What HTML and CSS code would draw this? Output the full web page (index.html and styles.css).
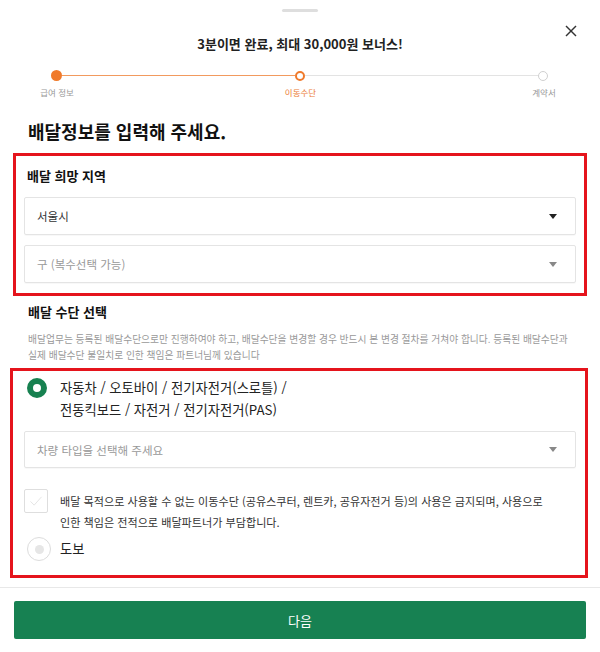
FILE: index.html
```html
<!DOCTYPE html>
<html lang="ko">

<head>
    <meta charset="UTF-8">
    <meta name="viewport" content="width=device-width, initial-scale=1.0">
    <title>배달정보 입력</title>
    <link rel="stylesheet" href="styles.css">
</head>

<body>
    <div class="sheet">
        <div class="handle"></div>

        <div class="sheet-header">
            <span></span>
            <h2 class="sheet-title">3분이면 완료, 최대 30,000원 보너스!</h2>
            <button class="close-btn" aria-label="닫기">
                <svg width="12" height="12" viewBox="0 0 12 12">
                    <line x1="1" y1="1" x2="11" y2="11" stroke="#333" stroke-width="1.4"/>
                    <line x1="11" y1="1" x2="1" y2="11" stroke="#333" stroke-width="1.4"/>
                </svg>
            </button>
        </div>

        <div class="steps">
            <span class="step-dot done"></span>
            <span class="step-line done"></span>
            <span class="step-dot current"></span>
            <span class="step-line"></span>
            <span class="step-dot"></span>
        </div>
        <div class="step-labels">
            <span>급여 정보</span>
            <span class="current">이동수단</span>
            <span>계약서</span>
        </div>

        <div class="content">
            <h1 class="page-title">배달정보를 입력해 주세요.</h1>

            <div class="highlight area-box">
                <h3 class="field-title">배달 희망 지역</h3>
                <div class="select">
                    <span>서울시</span>
                    <span class="caret"></span>
                </div>
                <div class="select placeholder">
                    <span>구 (복수선택 가능)</span>
                    <span class="caret"></span>
                </div>
            </div>

            <h3 class="section-title">배달 수단 선택</h3>
            <p class="section-desc">배달업무는 등록된 배달수단으로만 진행하여야 하고, 배달수단을 변경할 경우 반드시 본 변경 절차를 거쳐야 합니다. 등록된 배달수단과<br>실제 배달수단 불일치로 인한 책임은 파트너님께 있습니다</p>

            <div class="highlight vehicle-box">
                <div class="option">
                    <div class="option-mark"><span class="radio checked"></span></div>
                    <div class="option-label">자동차 / 오토바이 / 전기자전거(스로틀) /<br>전동킥보드 / 자전거 / 전기자전거(PAS)</div>
                </div>

                <div class="select placeholder vehicle-select">
                    <span>차량 타입을 선택해 주세요</span>
                    <span class="caret"></span>
                </div>

                <div class="agree">
                    <span class="checkbox">
                        <svg width="24" height="24" viewBox="0 0 24 24">
                            <polyline points="6,12.5 10,16.5 18,7.5" fill="none" stroke="#e2e2e2" stroke-width="1"/>
                        </svg>
                    </span>
                    <p class="agree-text">배달 목적으로 사용할 수 없는 이동수단 (공유스쿠터, 렌트카, 공유자전거 등)의 사용은 금지되며, 사용으로<br>인한 책임은 전적으로 배달파트너가 부담합니다.</p>
                </div>

                <div class="option walk">
                    <div class="option-mark"><span class="radio"><span class="radio-dot"></span></span></div>
                    <div class="option-label">도보</div>
                </div>
            </div>
        </div>

        <div class="sheet-footer">
            <button class="next-btn">다음</button>
        </div>
    </div>
</body>

</html>
```

FILE: styles.css
```css
* {
    box-sizing: border-box;
}

body {
    margin: 0;
    background: white;
    font-family: "Noto Sans CJK KR", "Noto Sans", sans-serif;
    color: #222;
}

h1, h2, h3, p {
    margin: 0;
}

.sheet {
    width: 600px;
    height: 652px;
    overflow: hidden;
}

.handle {
    width: 36px;
    height: 3px;
    margin: 9px auto 0;
    border-radius: 2px;
    background: #dedede;
}

.sheet-header {
    display: grid;
    grid-template-columns: 1fr auto 1fr;
    height: 26px;
    margin-top: 13px;
}

.sheet-title {
    align-self: end;
    font-size: 13px;
    line-height: 14px;
    font-weight: 700;
    color: #222;
}

.close-btn {
    justify-self: end;
    align-self: start;
    width: 12px;
    height: 12px;
    margin-right: 23px;
    padding: 0;
    border: none;
    background: none;
    display: flex;
}

/* step indicator */
.steps {
    display: flex;
    align-items: center;
    height: 11px;
    margin-top: 19px;
    padding: 0 52px 0 51px;
}

.step-dot {
    width: 10px;
    height: 10px;
    border-radius: 50%;
    border: 1.5px solid #d0d0d0;
    background: white;
    flex: none;
}

.step-dot.done {
    width: 11px;
    height: 11px;
    border: none;
    background: #f07a2b;
}

.step-dot.current {
    border: 2px solid #f07a2b;
}

.step-line {
    flex: 1;
    height: 1px;
    background: #e3e3e3;
}

.step-line.done {
    background: #f29a5e;
}

.step-labels {
    display: flex;
    justify-content: space-between;
    margin-top: 6px;
    padding: 0 16px 0 17px;
    font-size: 8.5px;
    line-height: 10px;
    color: #999;
}

.step-labels span {
    width: 80px;
    text-align: center;
}

.step-labels .current {
    color: #ec7a33;
}

/* form */
.content {
    padding: 0 12px 0 10px;
}

.page-title {
    margin-top: 22px;
    padding-left: 18px;
    font-size: 18px;
    line-height: 24px;
    font-weight: 700;
    color: #111;
}

.highlight {
    border: 3px solid #e5141c;
}

.area-box {
    margin: 10px 1px 0 3px;
    padding: 11px 8px 10px;
}

.field-title {
    padding-left: 3px;
    font-size: 13px;
    line-height: 18px;
    font-weight: 700;
    color: #111;
}

.select {
    display: flex;
    align-items: center;
    justify-content: space-between;
    height: 38px;
    margin-top: 10px;
    padding: 0 18px 0 12px;
    border: 1px solid #e4e4e4;
    border-radius: 2px;
    box-shadow: 0 1px 1px rgba(0, 0, 0, 0.03);
    font-size: 11.5px;
    color: #333;
}

.area-box .field-title + .select {
    margin-top: 12px;
}

.select.placeholder {
    color: #999;
}

.caret {
    width: 0;
    height: 0;
    border-left: 4px solid transparent;
    border-right: 4px solid transparent;
    border-top: 5px solid #222;
}

.placeholder .caret {
    border-top-color: #888;
}

.section-title {
    margin-top: 7px;
    padding-left: 18px;
    font-size: 13px;
    line-height: 18px;
    font-weight: 700;
    color: #111;
}

.section-desc {
    margin-top: 10px;
    padding: 0 10px 0 18px;
    font-size: 9.75px;
    line-height: 16px;
    color: #999;
    white-space: nowrap;
}

.vehicle-box {
    margin-top: 5px;
    padding: 6px 9px 14px 11px;
}

.option {
    display: flex;
    align-items: flex-start;
}

.option-mark {
    width: 36px;
    flex: none;
    display: flex;
    padding-left: 3px;
}

.option-label {
    font-size: 13.3px;
    line-height: 22px;
    color: #222;
}

.radio {
    width: 20px;
    height: 20px;
    margin-top: 1px;
    border-radius: 50%;
    border: 6px solid #178150;
    background: white;
}

.radio:not(.checked) {
    width: 24px;
    height: 24px;
    margin-top: 0;
    border: 1px solid #dcdcdc;
    display: flex;
    align-items: center;
    justify-content: center;
}

.radio-dot {
    width: 9px;
    height: 9px;
    border-radius: 50%;
    background: #e6e6e6;
}

.vehicle-select {
    margin-top: 10px;
    height: 37px;
}

.agree {
    display: flex;
    align-items: flex-start;
    margin-top: 21px;
}

.checkbox {
    width: 24px;
    height: 24px;
    flex: none;
    border: 1px solid #dedede;
    border-radius: 2px;
    display: flex;
    align-items: center;
    justify-content: center;
}

.agree-text {
    margin: 2px 0 0 12px;
    font-size: 11.1px;
    line-height: 21px;
    color: #333;
    white-space: nowrap;
}

.walk {
    margin-top: 4px;
    align-items: center;
}

.walk .option-label {
    line-height: 24px;
}

.sheet-footer {
    margin-top: 9px;
    padding: 13px 14px 0;
    border-top: 1px solid #e8e8e8;
}

.next-btn {
    width: 100%;
    height: 38px;
    border: none;
    border-radius: 2px;
    background: #178152;
    color: white;
    font-family: inherit;
    font-size: 13px;
}
```
